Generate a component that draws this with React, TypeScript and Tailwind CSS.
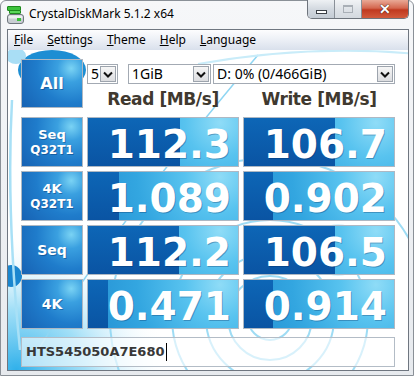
import React from "react";

const rows = [
  { label: ["Seq", "Q32T1"], read: "112.3", write: "106.7" },
  { label: ["4K", "Q32T1"], read: "1.089", write: "0.902" },
  { label: ["Seq"], read: "112.2", write: "106.5" },
  { label: ["4K"], read: "0.471", write: "0.914" },
];

// meter uses a log scale, same as the app: 0.1 MB/s .. 10000 MB/s
function meter(v: string) {
  const n = parseFloat(v);
  const r = Math.max(0, Math.min(1, Math.log10(n * 10) / 5));
  return Math.round(r * 150);
}

function Chevron() {
  return (
    <svg width="10" height="7" viewBox="0 0 10 7">
      <polyline points="1,1.5 5,5.5 9,1.5" fill="none" stroke="#111" strokeWidth="2" />
    </svg>
  );
}

function Combo({ text, w }: { text: string; w: string }) {
  return (
    <div className={`flex h-[20px] ${w} items-stretch border border-[#a3aab3] bg-white`}>
      <span className="flex-1 pl-[3px] text-[14px] leading-[18px] text-black">{text}</span>
      <span className="m-[1px] flex w-[16px] items-center justify-center border border-[#9da4ad] bg-[linear-gradient(#f6f6f6,#dcdde0)]">
        <Chevron />
      </span>
    </div>
  );
}

function Label({ lines }: { lines: string[] }) {
  return (
    <div className="flex h-[50px] flex-col items-center justify-center border border-[#aeb8c3] bg-[radial-gradient(circle_at_82%_18%,#7ad3f4_0,#3aa0e0_22%,#1f7ccb_55%,#1762b3_100%)] font-['DejaVu_Sans',sans-serif] font-bold text-white [text-shadow:1px_1px_0_rgba(0,30,80,0.35)]">
      {lines.length > 1 ? (
        <>
          <span className="text-[13px] leading-[17px]">{lines[0]}</span>
          <span className="text-[12px] leading-[15px]">{lines[1]}</span>
        </>
      ) : (
        <span className="text-[14px] leading-[16px]">{lines[0]}</span>
      )}
    </div>
  );
}

function Value({ v }: { v: string }) {
  return (
    <div className="relative h-[50px] overflow-hidden border border-[#aeb8c3] bg-[radial-gradient(circle_at_88%_10%,#8fdcf7_0,#58c3ef_25%,#33a6e0_60%,#2590d3_100%)]">
      <div
        className="absolute inset-y-0 left-0 bg-[linear-gradient(#0d66b6,#0a54a3)]"
        style={{ width: meter(v) }}
      />
      <div className="relative flex h-full items-center justify-end pr-[7px] pt-[5px] font-['DejaVu_Sans',sans-serif] text-[39px] font-bold leading-none text-white [text-shadow:1px_1px_0_rgba(0,30,80,0.3)]">
        {v}
      </div>
    </div>
  );
}

function AppIcon() {
  return (
    <svg width="17" height="18" viewBox="0 0 17 18">
      <rect x="0.5" y="0.5" width="13" height="4" rx="0.5" fill="#3cc23c" stroke="#1e8a1e" />
      <rect x="2.5" y="4.5" width="11" height="3" rx="0.5" fill="#5bd65b" stroke="#1e8a1e" />
      <rect x="0.5" y="8.5" width="16" height="9" rx="2.5" fill="#c9ced3" stroke="#6f767d" />
      <rect x="1.5" y="9.5" width="14" height="3" rx="1.5" fill="#eef0f2" />
      <rect x="10" y="12" width="4" height="3" fill="#39c239" />
    </svg>
  );
}

function Swirl() {
  return (
    <svg className="pointer-events-none absolute inset-0" width="400" height="320" viewBox="0 0 400 320">
      <defs>
        <radialGradient id="bl" cx="0.05" cy="1" r="0.9">
          <stop offset="0" stopColor="#2fb0ea" />
          <stop offset="0.45" stopColor="#8ad7f5" stopOpacity="0.8" />
          <stop offset="1" stopColor="#ffffff" stopOpacity="0" />
        </radialGradient>
      </defs>
      <rect x="0" y="170" width="170" height="150" fill="url(#bl)" />
      <ellipse cx="44" cy="20" rx="34" ry="20" fill="#1d8ed3" />
      <ellipse cx="8" cy="6" rx="10" ry="8" fill="#a9def5" />
      <circle cx="3" cy="226" r="11" fill="#1a86cf" />
      <path d="M4 50 Q-2 160 12 300" fill="none" stroke="#a8e0f6" strokeWidth="2.5" />
      <path d="M30 300 Q110 170 250 5" fill="none" stroke="#8fd6f3" strokeWidth="1.5" />
      <path d="M190 14 Q300 -6 410 4" fill="none" stroke="#c9ecf9" strokeWidth="2" />
      <g fill="none" stroke="#8ed6f3" strokeWidth="2" opacity="0.85">
        <circle cx="262" cy="268" r="22" />
        <circle cx="262" cy="268" r="42" />
        <circle cx="262" cy="268" r="64" />
        <circle cx="262" cy="268" r="98" />
        <circle cx="262" cy="268" r="160" />
      </g>
      <circle cx="330" cy="200" r="26" fill="#bde8f8" opacity="0.6" />
      <circle cx="157" cy="312" r="4" fill="#ffffff" />
    </svg>
  );
}

export default function App() {
  return (
    <div className="h-[378px] w-[416px] overflow-hidden bg-white font-['Noto_Sans',sans-serif]">
      <div className="flex h-[376px] w-[414px] flex-col rounded-t-[6px] border border-[#8a9097] bg-[linear-gradient(#f6f7f9,#e7eaee)] pb-[4px] pl-[6px] pr-[4px]">
        {/* title bar */}
        <div className="flex h-[28px] shrink-0">
          <div className="mt-[5px]">
            <AppIcon />
          </div>
          <span className="ml-[5px] mt-[5px] text-[12px] leading-[16px] text-black">CrystalDiskMark 5.1.2 x64</span>
          <div className="-mt-[1px] ml-auto flex h-[19px] overflow-hidden rounded-b-[5px] border border-t-0 border-[#6e747c]">
            <div className="flex w-[27px] items-center justify-center border-r border-[#8a9098] bg-[linear-gradient(#eef1f4,#d3d9e0_50%,#c4cbd4)]">
              <span className="mt-[5px] h-[4px] w-[11px] border border-[#3a3f45] bg-white" />
            </div>
            <div className="flex w-[27px] items-center justify-center border-r border-[#8a9098] bg-[linear-gradient(#f1f3f5,#dfe3e8_50%,#d4d9df)]">
              <span className="h-[8px] w-[10px] border border-[#a9afb6] border-t-2" />
            </div>
            <div className="flex w-[46px] items-center justify-center bg-[linear-gradient(#e9a996,#d4674f_45%,#c0391f_55%,#d25a3c)]">
              <span className="text-[14px] font-bold leading-none text-white [text-shadow:0_0_1px_#3a1208,0_0_1px_#3a1208]">✕</span>
            </div>
          </div>
        </div>

        {/* client area */}
        <div className="flex flex-1 flex-col overflow-hidden border border-[#6f7680] bg-white">
          <div className="flex h-[20px] shrink-0 items-center gap-[14px] bg-[linear-gradient(#fdfdfe,#eaeef5_55%,#d9e0ec)] pl-[6px] text-[12px] text-black">
            <span><u>F</u>ile</span>
            <span><u>S</u>ettings</span>
            <span><u>T</u>heme</span>
            <span><u>H</u>elp</span>
            <span><u>L</u>anguage</span>
          </div>

          <div className="relative flex-1">
            <Swirl />
            <div className="relative px-[13px] pt-[9px]">
              <div className="grid grid-cols-[62px_152px_152px] gap-[4px]">
                <div className="flex h-[49px] items-center justify-center border border-[#aeb8c3] bg-[radial-gradient(circle_at_82%_18%,#7ad3f4_0,#3aa0e0_22%,#1f7ccb_55%,#1762b3_100%)] font-['DejaVu_Sans',sans-serif] text-[16px] font-bold text-white [text-shadow:1px_1px_0_rgba(0,30,80,0.35)]">
                  All
                </div>
                <div className="col-span-2 flex flex-col">
                  <div className="mt-[5px] flex gap-[10px]">
                    <Combo text="5" w="w-[33px]" />
                    <div className="flex gap-[2px]">
                      <Combo text="1GiB" w="w-[83px]" />
                      <Combo text="D: 0% (0/466GiB)" w="w-[182px]" />
                    </div>
                  </div>
                  <div className="grid flex-1 grid-cols-2 gap-[4px] pt-[3px] font-['DejaVu_Sans',sans-serif] text-[17px] font-bold tracking-[-0.4px] text-[#40392f]">
                    <span className="text-center">Read [MB/s]</span>
                    <span className="text-center">Write [MB/s]</span>
                  </div>
                </div>
                {rows.map((r) => (
                  <React.Fragment key={r.read}>
                    <Label lines={r.label} />
                    <Value v={r.read} />
                    <Value v={r.write} />
                  </React.Fragment>
                ))}
              </div>
              <div className="mt-[8px] flex h-[30px] w-[374px] items-center border border-[#b3bcc6] bg-white/60 pl-[4px] font-['DejaVu_Sans',sans-serif] text-[13px] font-bold text-[#383838]">
                HTS545050A7E680
                <span className="ml-[1px] h-[18px] w-[1px] bg-black" />
              </div>
            </div>
          </div>
        </div>
      </div>
    </div>
  );
}
